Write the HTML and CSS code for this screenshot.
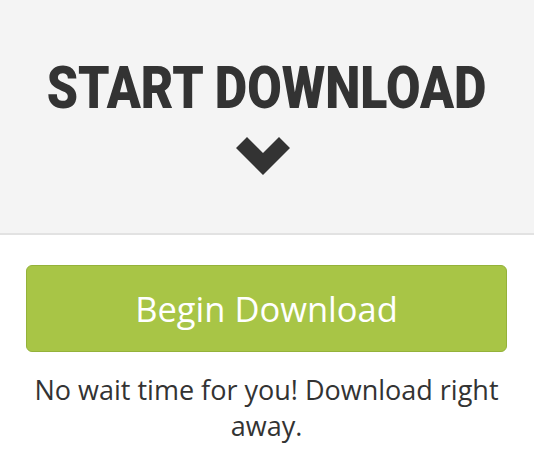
FILE: index.html
```html
<!DOCTYPE html>
<html>
<head>
<meta charset="utf-8">
<link rel="stylesheet" href="styles.css">
</head>
<body>
<header class="hero">
  <h1 class="hero-title"><span class="hero-text">START DOWNLOAD</span></h1>
  <svg class="chevron" width="54" height="40" viewBox="0 0 54 40" aria-hidden="true">
    <path d="M0 11 L11 0 L27 16 L43 0 L54 11 L27 38 Z" fill="#333"/>
  </svg>
</header>
<main class="content">
  <a class="btn" href="#">Begin Download</a>
  <p class="note">No wait time for you! Download right away.</p>
</main>
</body>
</html>
```
FILE: styles.css
```css
html, body {
  margin: 0;
  padding: 0;
  background: #fff;
}
body {
  font-family: "Open Sans", sans-serif;
  color: #333;
}
.hero {
  background: #f4f4f4;
  border-bottom: 2px solid #e2e2e2;
  height: 235px;
  box-sizing: border-box;
  display: flex;
  flex-direction: column;
  align-items: center;
  padding-top: 56px;
}
.hero-title {
  margin: 0;
  font-family: Roboto, sans-serif;
  font-weight: 900;
  font-size: 60px;
  line-height: 64px;
  color: #333;
}
.hero-text {
  display: inline-block;
  transform: scaleX(0.834);
}
.chevron {
  display: block;
  margin-top: 17px;
  margin-right: 8px;
}
.content {
  padding: 30px 27px 0 26px;
  display: flex;
  flex-direction: column;
  align-items: stretch;
}
.btn {
  display: flex;
  align-items: center;
  justify-content: center;
  height: 87px;
  box-sizing: border-box;
  background: #a8c546;
  border: 1px solid #94b23a;
  border-radius: 6px;
  color: #fff;
  text-decoration: none;
  font-size: 34.5px;
}
.note {
  margin: 20px 0 0;
  text-align: center;
  font-size: 27px;
  line-height: 36px;
  color: #333;
}
```
